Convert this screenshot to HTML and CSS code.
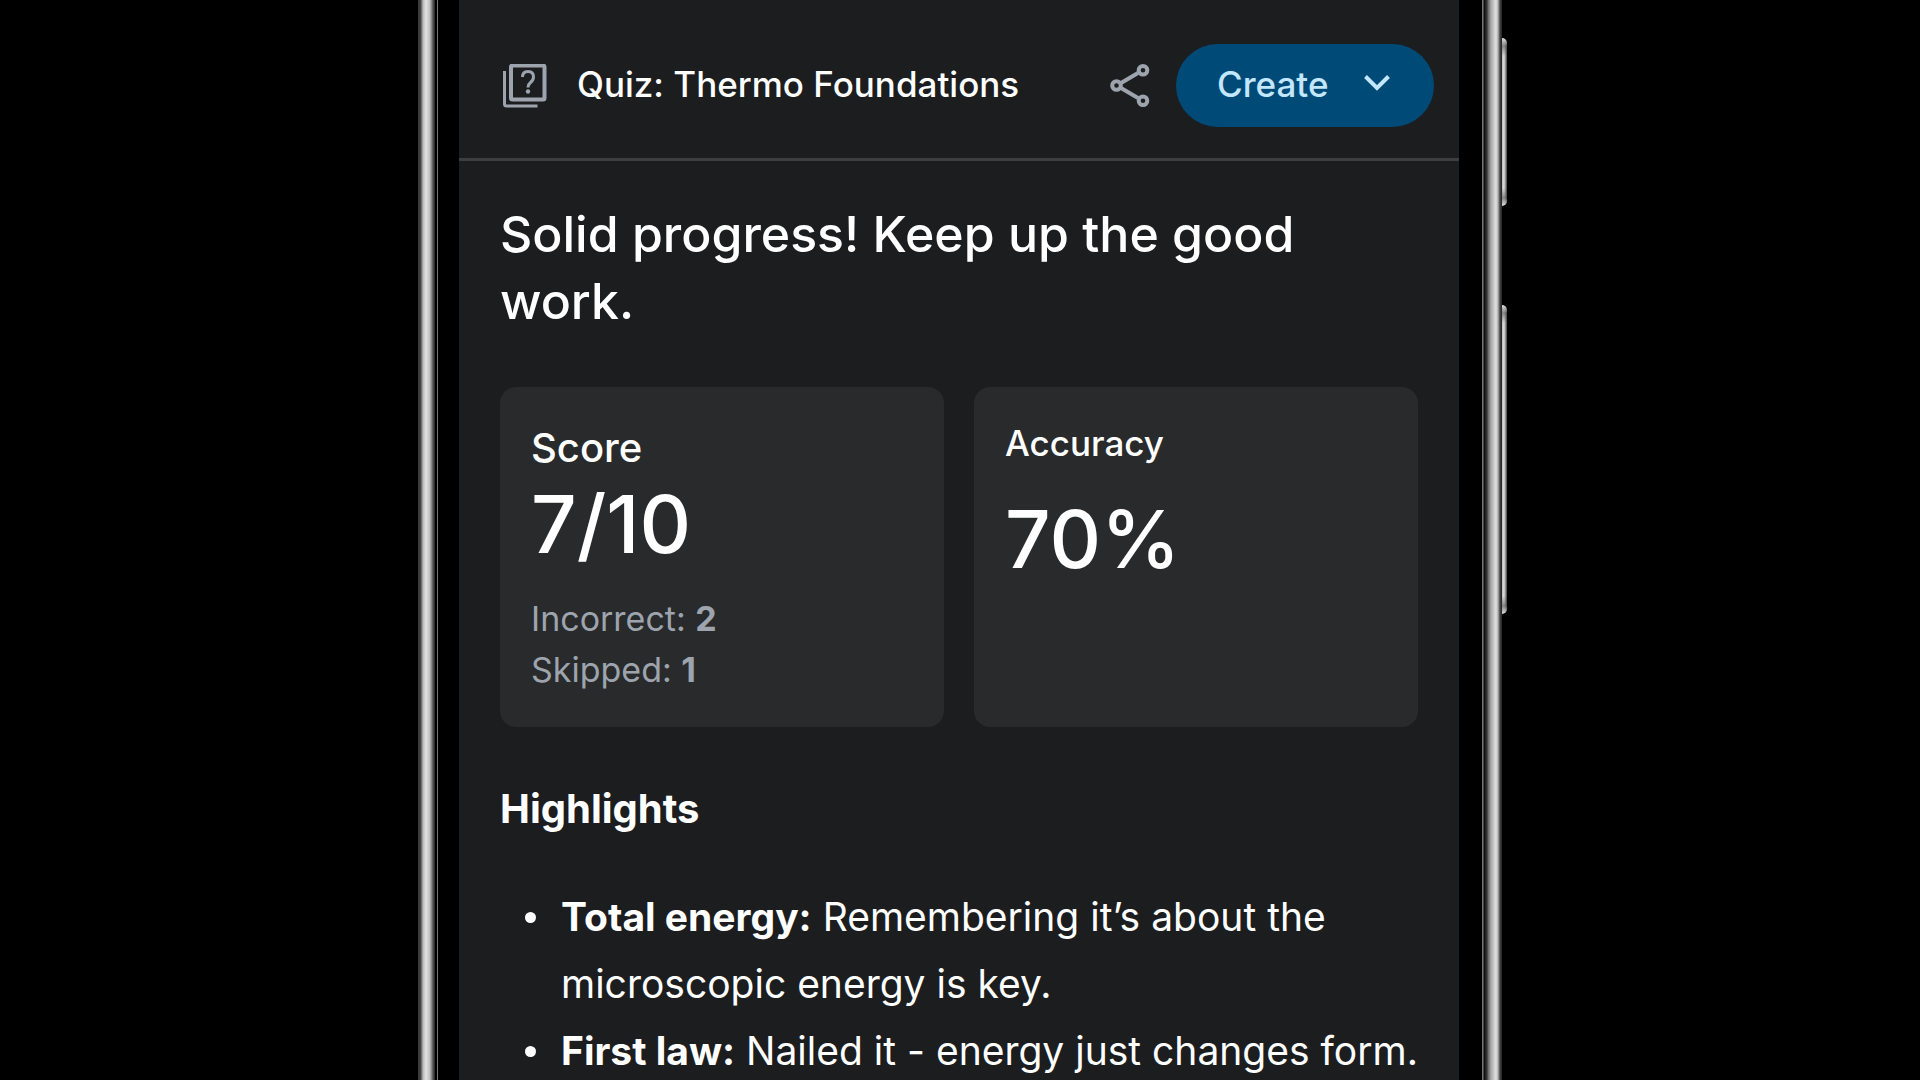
FILE: index.html
```
<!DOCTYPE html>
<html lang="en">
<head>
  <meta charset="utf-8">
  <meta name="viewport" content="width=device-width, initial-scale=1">
  <title>Quiz: Thermo Foundations</title>
  <link rel="stylesheet" href="styles.css">
</head>
<body>
  <div class="phone">
    <div class="rail rail-left"></div>
    <main class="screen">
      <header class="topbar">
        <svg class="quiz-icon" viewBox="0 0 44 44" aria-hidden="true">
          <rect x="8" y="1.500" width="33.500" height="34" rx="1.500"/>
          <path class="thin" d="M1.500 7v33q0 2 2 2h31"/>
          <path class="thin" d="M19.500 13q0-5.500 5.500-5.500t5.500 5.500q0 3-3 5.500q-2.500 2-2.500 5"/>
          <circle class="dot" cx="25" cy="27.500" r="2.200"/>
        </svg>
        <h1 class="title">Quiz: Thermo Foundations</h1>
        <button class="share" type="button" aria-label="Share">
          <svg class="share-icon" viewBox="0 0 40 44" aria-hidden="true">
            <path d="M11 19L28 9M11 24L28 34"/>
            <circle cx="6.500" cy="21.500" r="4.300"/>
            <circle cx="33" cy="6.300" r="4.300"/>
            <circle cx="33" cy="36.700" r="4.300"/>
          </svg>
        </button>
        <button class="create" type="button">
          Create
          <svg class="chevron" viewBox="0 0 26 18" aria-hidden="true"><path d="M1.500 1.500L13 13L24.500 1.500"/></svg>
        </button>
      </header>
      <div class="content">
        <h2 class="headline">Solid progress! Keep up the good work.</h2>
        <div class="cards">
          <section class="card">
            <h3 class="label label-large">Score</h3>
            <p class="value">7/10</p>
            <p class="detail">Incorrect: <strong>2</strong></p>
            <p class="detail">Skipped: <strong>1</strong></p>
          </section>
          <section class="card card-spaced">
            <h3 class="label">Accuracy</h3>
            <p class="value">70%</p>
          </section>
        </div>
        <h3 class="subhead">Highlights</h3>
        <ul class="highlights">
          <li><p><strong>Total energy:</strong> Remembering it’s about the microscopic energy is key.</p></li>
          <li><p><strong>First law:</strong> Nailed it - energy just changes form.</p></li>
        </ul>
      </div>
    </main>
    <div class="rail rail-right">
      <span class="key key-action"></span>
      <span class="key key-power"></span>
    </div>
  </div>
</body>
</html>
```
FILE: styles.css
```
* {
  box-sizing: border-box;
}

body {
  margin: 0;
  background: #000;
  color: #fff;
  font-family: Inter, "Liberation Sans", sans-serif;
}

h1, h2, h3, p, ul {
  margin: 0;
  padding: 0;
}

/* Phone body: metal rail, bezel, screen, bezel, metal rail */
.phone {
  display: grid;
  grid-template-columns: 20px minmax(0, 1fr) 20px;
  width: 100%;
  max-width: 1084px;
  height: 100vh;
  margin: 0 auto;
  overflow-y: clip;
}

.rail-left {
  background: linear-gradient(90deg, #3a3a3a 0 2px, #555 3px, #b8b8b8 5px, #e2e2e2 8px, #bcbcbc 12px, #555 15px, #222 17px, #000 17px 19px, #777 19px);
}

.rail-right {
  position: relative;
  background: linear-gradient(90deg, #777 0 1px, #111 2px 3px, #333 4px 5px, #666 6px, #a8a8a8 9px, #e2e2e2 14px, #b0b0b0 16px, #444 18px, #222);
}

.key {
  position: absolute;
  left: 100%;
  width: 5px;
  border-radius: 0 5px 5px 0;
  background:
    linear-gradient(#ddd 0, #4448 8px, transparent 18px calc(100% - 18px), #4448 calc(100% - 8px), #ddd),
    linear-gradient(90deg, #bbb, #e0e0e0 2px, #777 4px, #444);
}

.key-action {
  top: 38px;
  height: 168px;
}

.key-power {
  top: 305px;
  height: 309px;
}

.screen {
  margin: 0 23px 0 21px;
  background: #1c1d1f;
  overflow: hidden;
}

.topbar {
  display: flex;
  align-items: center;
  padding: 44px 25px 31px 44px;
  border-bottom: 3px solid #3c3e40;
}

.quiz-icon {
  width: 44px;
  height: 44px;
  fill: none;
  stroke: #9da4ad;
  stroke-width: 4;
}

.quiz-icon .thin {
  stroke-width: 3;
}

.quiz-icon .dot {
  fill: #9da4ad;
  stroke: none;
}

.title {
  flex: 1;
  margin-left: 30px;
  padding-bottom: 3px;
  font-size: 35px;
  font-weight: 500;
  line-height: 48px;
}

button {
  border: 0;
  font: inherit;
  cursor: pointer;
}

.share {
  display: flex;
  margin-right: 26px;
  padding: 0;
  background: none;
}

.share-icon {
  width: 40px;
  height: 44px;
  fill: none;
  stroke: #9da4ad;
  stroke-width: 4;
}

.create {
  display: flex;
  align-items: center;
  justify-content: space-between;
  width: 258px;
  height: 83px;
  padding: 0 44px 3px 41px;
  border-radius: 42px;
  background: #004a77;
  color: #c2e7ff;
  font-size: 35px;
  font-weight: 500;
}

.chevron {
  width: 26px;
  height: 18px;
  fill: none;
  stroke: currentColor;
  stroke-width: 4;
}

.content {
  padding: 40px 41px;
}

.headline {
  font-size: 50px;
  font-weight: 500;
  line-height: 67px;
}

.cards {
  display: grid;
  grid-template-columns: 1fr 1fr;
  gap: 30px;
  margin-top: 52px;
}

.card {
  padding: 32px 31px;
  border-radius: 16px;
  background: #292a2c;
}

.label {
  font-size: 35px;
  font-weight: 500;
  line-height: 48px;
}

.label-large {
  font-size: 40px;
  line-height: 58px;
}

.value {
  font-size: 80px;
  font-weight: 500;
  line-height: 94px;
}

.card-spaced .value {
  margin-top: 25px;
}

.detail {
  color: #9da4ad;
  font-size: 34px;
  line-height: 51px;
}

.value + .detail {
  margin-top: 22px;
}

.subhead {
  margin-top: 53px;
  font-size: 40px;
  font-weight: 700;
  line-height: 58px;
}

.highlights {
  margin-top: 45px;
  padding-left: 25px;
  list-style: none;
  font-size: 39px;
  line-height: 67px;
}

.highlights li {
  display: grid;
  grid-template-columns: 11px 1fr;
  gap: 25px;
}

.highlights li::before {
  content: "";
  height: 11px;
  margin-top: 29px;
  border-radius: 50%;
  background: #fff;
}
```
